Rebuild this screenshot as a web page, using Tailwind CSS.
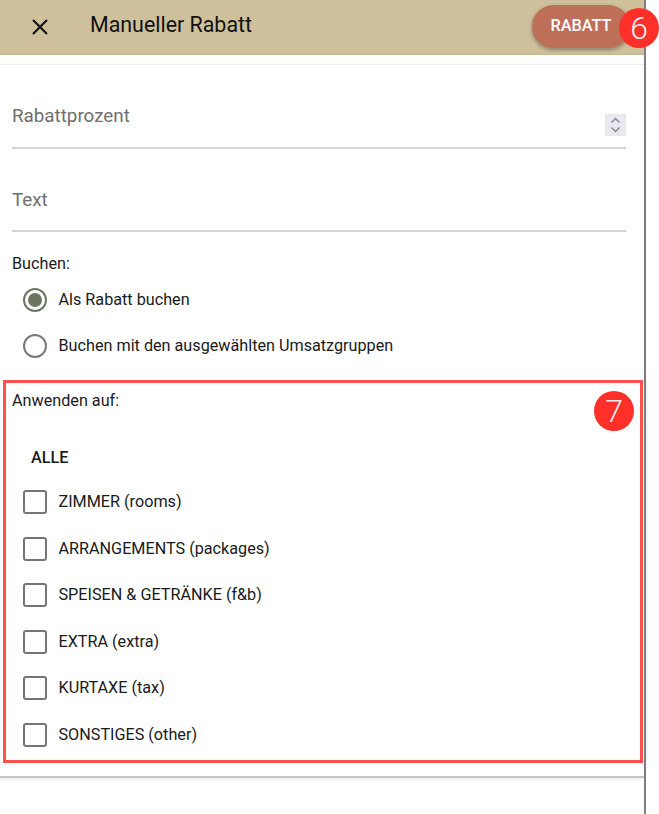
<!DOCTYPE html>
<html lang="de">
<head>
  <meta charset="UTF-8" />
  <title>Manueller Rabatt</title>
  <script src="https://cdn.jsdelivr.net/npm/@tailwindcss/browser@4"></script>
</head>
<body class="bg-white font-['Roboto',sans-serif] overflow-hidden">
  <div class="relative w-[659px] h-[814px] overflow-hidden">
    <!-- Panel -->
    <div class="w-[646px] h-[814px] border-r-2 border-[#7f7f7f]">
      <!-- Header -->
      <header class="relative h-[55px] bg-[#cfc09c] border-b border-[#c6b690] flex items-center">
        <svg class="ml-[32px] w-[16px] h-[16px]" viewBox="0 0 16 16" fill="none" stroke="#111" stroke-width="2.1">
          <path d="M1 1L15 15M15 1L1 15" />
        </svg>
        <h1 class="ml-[42px] text-[21.4px] text-[#111] mb-[4px]">Manueller Rabatt</h1>
        <button class="absolute left-[532px] top-[5px] w-[98px] h-[43px] rounded-full bg-[#bd6f58] text-white text-[16.3px] font-medium shadow-[0_2px_4px_rgba(0,0,0,0.35)]">RABATT</button>
      </header>

      <!-- Form -->
      <main class="mt-[9px] h-[714px] border-t border-[#eeeeee] border-b-2 border-b-[#c4c4c4] shadow-[0_2px_4px_rgba(0,0,0,0.08)]">
        <div class="relative ml-[12px] mr-[18px] h-[84px] border-b-2 border-[#d4d4d4] text-[18.8px] text-[#6f6f6f] pt-[39px] leading-[24px]">
          Rabattprozent
          <div class="absolute right-0 top-[49px] w-[21px] h-[22px] bg-[#e8e8ee] flex items-center justify-center">
            <svg class="w-[13px] h-[18px]" viewBox="0 0 13 18" fill="none" stroke="#8a8a94" stroke-width="1.5">
              <path d="M2.5 6.5L6.5 2.5L10.5 6.5M2.5 11.5L6.5 15.5L10.5 11.5" />
            </svg>
          </div>
        </div>
        <div class="ml-[12px] mr-[18px] h-[83px] border-b-2 border-[#d4d4d4] text-[18.8px] text-[#6f6f6f] pt-[39px] leading-[24px]">Text</div>

        <div class="mt-[20px] ml-[12px] text-[16.2px] leading-[24px] text-[#1a1a1a]">Buchen:</div>
        <div class="mt-[12px] ml-[23px] h-[24px] flex items-center text-[16.2px] text-[#1a1a1a]">
          <span class="w-[24px] h-[24px] rounded-full border-2 border-[#6f7465] flex items-center justify-center">
            <span class="w-[14px] h-[14px] rounded-full bg-[#6b7560]"></span>
          </span>
          <span class="ml-[11.5px]">Als Rabatt buchen</span>
        </div>
        <div class="mt-[22px] ml-[23px] h-[24px] flex items-center text-[16.2px] text-[#1a1a1a]">
          <span class="w-[24px] h-[24px] rounded-full border-2 border-[#7a7a7a]"></span>
          <span class="ml-[11.5px]">Buchen mit den ausgewählten Umsatzgruppen</span>
        </div>

        <!-- Anwenden auf -->
        <section class="mt-[22px] ml-[3px] w-[640px] h-[383px] border-[3px] border-[#ff4f4f] text-[16.2px] text-[#1a1a1a]">
          <div class="mt-[6px] ml-[6px] leading-[24px]">Anwenden auf:</div>
          <div class="mt-[33px] ml-[25px] leading-[24px] font-medium">ALLE</div>
          <div class="mt-[20.4px] ml-[17px] flex flex-col gap-[22.5px]">
            <label class="h-[24px] flex items-center"><span class="w-[24px] h-[24px] rounded-[3px] border-2 border-[#757575]"></span><span class="ml-[11.5px]">ZIMMER (rooms)</span></label>
            <label class="h-[24px] flex items-center"><span class="w-[24px] h-[24px] rounded-[3px] border-2 border-[#757575]"></span><span class="ml-[11.5px]">ARRANGEMENTS (packages)</span></label>
            <label class="h-[24px] flex items-center"><span class="w-[24px] h-[24px] rounded-[3px] border-2 border-[#757575]"></span><span class="ml-[11.5px]">SPEISEN &amp; GETRÄNKE (f&amp;b)</span></label>
            <label class="h-[24px] flex items-center"><span class="w-[24px] h-[24px] rounded-[3px] border-2 border-[#757575]"></span><span class="ml-[11.5px]">EXTRA (extra)</span></label>
            <label class="h-[24px] flex items-center"><span class="w-[24px] h-[24px] rounded-[3px] border-2 border-[#757575]"></span><span class="ml-[11.5px]">KURTAXE (tax)</span></label>
            <label class="h-[24px] flex items-center"><span class="w-[24px] h-[24px] rounded-[3px] border-2 border-[#757575]"></span><span class="ml-[11.5px]">SONSTIGES (other)</span></label>
          </div>
        </section>
      </main>
    </div>

    <!-- Numbered callouts -->
    <div class="absolute left-[619px] top-[8px] w-[40px] h-[40px] rounded-full bg-[#ff3029] text-[#eeeeee] text-[32px] font-light flex items-center justify-center">6</div>
    <div class="absolute left-[594px] top-[391px] w-[40px] h-[40px] rounded-full bg-[#ff3029] text-[#eeeeee] text-[32px] font-light flex items-center justify-center">7</div>
  </div>
</body>
</html>
